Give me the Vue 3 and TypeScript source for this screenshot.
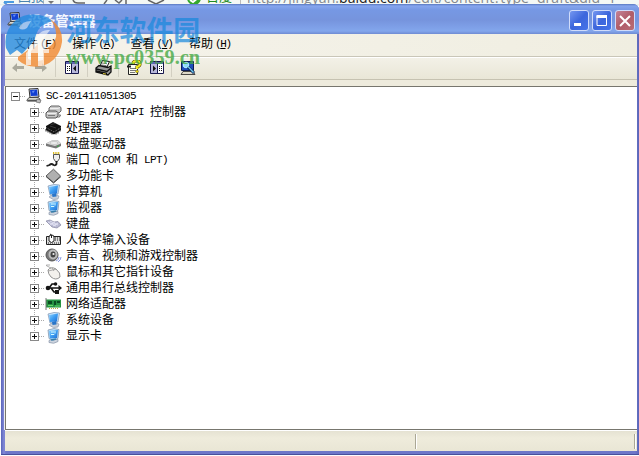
<script setup lang="ts">
interface Segment { text: string; latin: boolean }
interface Device { label: string; icon: string }

const devices: Device[] = [
  { label: 'IDE ATA/ATAPI 控制器', icon: 'ide' },
  { label: '处理器', icon: 'cpu' },
  { label: '磁盘驱动器', icon: 'disk' },
  { label: '端口 (COM 和 LPT)', icon: 'port' },
  { label: '多功能卡', icon: 'card' },
  { label: '计算机', icon: 'computer' },
  { label: '监视器', icon: 'monitor' },
  { label: '键盘', icon: 'keyboard' },
  { label: '人体学输入设备', icon: 'hid' },
  { label: '声音、视频和游戏控制器', icon: 'sound' },
  { label: '鼠标和其它指针设备', icon: 'mouse' },
  { label: '通用串行总线控制器', icon: 'usb' },
  { label: '网络适配器', icon: 'network' },
  { label: '系统设备', icon: 'computer' },
  { label: '显示卡', icon: 'monitor' },
]

const menus = [
  { label: '文件', key: 'F' },
  { label: '操作', key: 'A' },
  { label: '查看', key: 'V' },
  { label: '帮助', key: 'H' },
]

// Latin runs are set in a narrower fixed-width face than the Chinese ones
function segments(label: string): Segment[] {
  return (label.match(/[\x20-\x7e]+|[^\x20-\x7e]+/g) ?? []).map((text) => ({
    text,
    latin: /^[\x20-\x7e]/.test(text),
  }))
}
</script>

<template>
  <div class="desktop">
    <div class="browser-strip">
      <div class="tabs">
        <svg width="215" height="6" viewBox="0 0 215 6">
          <path d="M4 2h10M4 2l3 3" stroke="#4c9be0" stroke-width="2" fill="none" />
          <path d="M48 1l3 3 3-3" fill="#777" />
          <path d="M43.500 0v5M60.500 0v5" stroke="#bbb" />
          <path d="M73 0q1 3 5 3h7M104 4l3-4M115 0l4 3 3-3M126 0v4M148 0l8 4 8-4" stroke="#666" stroke-width="1.500" fill="none" />
          <circle cx="194" cy="-2" r="7" fill="#35a82c" />
          <path d="M190 0l3 2 6-5" stroke="#fff" stroke-width="2" fill="none" />
        </svg>
        <span class="tab-back">回报</span>
        <span class="tab-site">百度</span>
      </div>
      <span class="url">http://jingyan.<b>baidu.com</b>/edit/content?type=draft&amp;did=1</span>
    </div>

    <div class="window">
      <header class="titlebar">
        <svg class="title-icon" width="16" height="16" viewBox="0 0 16 16"><use href="#i-pc" /></svg>
        <span class="title">设备管理器</span>
        <div class="buttons">
          <span class="btn"><svg width="20" height="20"><path d="M5 14.500h7" stroke="#fff" stroke-width="3" /></svg></span>
          <span class="btn"><svg width="20" height="20"><path d="M5 6v9.500h9.500V6" fill="none" stroke="#fff" /><path d="M4.500 6.500h10.500" stroke="#fff" stroke-width="3" /></svg></span>
          <span class="btn close"><svg width="20" height="20"><path d="M5 6l10 10M15 6L5 16" stroke="#fff" stroke-width="2" /></svg></span>
        </div>
      </header>

      <nav class="menubar">
        <span v-for="m in menus" :key="m.key" class="menu">{{ m.label }}<span class="hot">(<u>{{ m.key }}</u>)</span></span>
      </nav>

      <div class="toolbar">
        <svg class="arrows" width="38" height="16" viewBox="0 0 38 16">
          <path d="M1 8l5-5v3h7v3H6v3z" fill="#aaa99d" />
          <path d="M36 8l-5-5v3h-7v3h7v3z" fill="#aaa99d" />
        </svg>
        <i class="sep"></i>
        <svg class="t1" width="15" height="14" viewBox="0 0 15 14">
          <path d="M.5.500h13v12H.5z" fill="#fff" stroke="#18184e" />
          <path d="M1 2h12" stroke="#6064b4" stroke-width="2" />
          <path d="M7 3h6v9H7z" fill="#b8b8dc" /><path d="M6.500 2v10" stroke="#18184e" />
          <path d="M2 5.500h1M4 5.500h1M2 7.500h1M4 7.500h1M2 9.500h1M4 9.500h1" stroke="#111" />
          <path d="M11 4.500v6L8 7.500z" fill="#111" />
        </svg>
        <i class="sep"></i>
        <svg class="t2" width="17" height="16" viewBox="0 0 17 16">
          <path d="M5 6L7.500.500l7 1L12 7z" fill="#fff" stroke="#111" />
          <path d="M7 3l5 .7M6.500 5l5 .7" stroke="#555" stroke-width=".8" />
          <path d="M1 8l3-2.500 9 2L16 6v6l-3 3L1 12z" fill="#999" stroke="#111" stroke-width="1.300" />
          <path d="M1 9l11 2.500L16 8M1 11l11 2.500" stroke="#111" fill="none" stroke-width="1.400" />
          <path d="M8 13.500l3 .6" stroke="#dec832" />
        </svg>
        <i class="sep"></i>
        <svg class="t3" width="15" height="16" viewBox="0 0 15 16">
          <path d="M1.500 4.500h9v10h-9z" fill="#fffef0" stroke="#222" />
          <path d="M3 8.500h6M3 10.500h6M3 12.500h5" stroke="#777" />
          <path d="M6 4q0-3 3.500-3t3.500 3q0 2-3 3v2" fill="none" stroke="#655b00" stroke-width="3.200" />
          <path d="M6 4q0-3 3.500-3t3.500 3q0 2-3 3v2" fill="none" stroke="#f5ea20" stroke-width="2" />
          <circle cx="10" cy="11.500" r="1.400" fill="#f5e400" stroke="#444" stroke-width=".5" />
          <path d="M0 6.500h4" stroke="#222" stroke-width="2" />
        </svg>
        <svg class="t4" width="15" height="14" viewBox="0 0 15 14">
          <path d="M.5.500h13v12H.5z" fill="#b8b8dc" stroke="#18184e" />
          <path d="M1 2h12" stroke="#6064b4" stroke-width="2" />
          <path d="M8 3h5v9H8z" fill="#fff" /><path d="M7.500 2v10" stroke="#18184e" />
          <path d="M9 5.500h1M11 5.500h1M9 7.500h1M11 7.500h1M9 9.500h1M11 9.500h1" stroke="#111" />
          <path d="M3 4.500v6l3-3z" fill="#111" />
        </svg>
        <i class="sep"></i>
        <svg class="t5" width="16" height="16" viewBox="0 0 16 16">
          <path d="M1.500 1.500h12v9h-12z" fill="#1d4ebc" stroke="#0c1d55" />
          <path d="M1 14.500l2-3h10l2 3z" fill="#ddd8c8" stroke="#222" stroke-width=".8" />
          <circle cx="6" cy="5" r="2.800" fill="#8edcf8" stroke="#bdf0ff" />
          <path d="M8 7l6 6" stroke="#061c4c" stroke-width="2.800" /><path d="M8 6.500l5.500 6" stroke="#6cc8ef" stroke-width="1.400" />
        </svg>
      </div>

      <div class="gap"></div>

      <main class="tree">
        <div class="row root">
          <span class="box minus"></span><i class="dots"></i>
          <svg width="16" height="16" viewBox="0 0 16 16"><use href="#i-pc" /></svg>
          <span class="label"><span class="latin">SC-201411051305</span></span>
        </div>
        <div class="children">
          <div v-for="d in devices" :key="d.label" class="row">
            <span class="box"></span><i class="dots"></i>
            <svg width="17" height="16" viewBox="0 0 17 16"><use :href="'#i-' + d.icon" /></svg>
            <span class="label"><span v-for="(s, i) in segments(d.label)" :key="i" :class="{ latin: s.latin }">{{ s.text }}</span></span>
          </div>
        </div>
      </main>

      <footer class="status"><span class="pane wide"></span><span class="pane"></span></footer>
    </div>

    <svg class="brand" width="210" height="76" viewBox="0 0 210 76">
      <g opacity=".8">
        <path d="M6 48Q3 31 16 20 28 11 47 17L53 21Q39 24 36 35L34 41 22 54 17 50 10 55z" fill="#258be0" />
        <path d="M19 28Q22 21 31 21l-4 7q-5 3-8 0z" fill="#a9cdf0" />
        <path d="M50 19Q63 27 62 42 59 61 42 66 28 69 18 60L18 57 28 50V59L31 60V51L38 44V61L43 60V50Q54 46 56 37 57 27 50 19z" fill="#f28a31" />
        <path d="M37 36Q42 29 50 30L44 38V49H49V53H44V66H38V53H31V65H26V53L33 45z" fill="#fff" opacity=".72" />
      </g>
      <text x="66" y="41" textLength="134" lengthAdjust="spacingAndGlyphs" class="brand-name">河东软件园</text>
      <text x="66" y="64" textLength="134" lengthAdjust="spacingAndGlyphs" class="brand-url">www.pc0359.cn</text>
    </svg>

    <svg class="defs" width="0" height="0">
      <defs>
        <linearGradient id="screen" x1="0" y1="0" x2="1" y2="1">
          <stop offset="0" stop-color="#8fd3ff" /><stop offset=".5" stop-color="#3d9df2" /><stop offset="1" stop-color="#1f6cd0" />
        </linearGradient>
        <linearGradient id="metal" x1="0" y1="0" x2="0" y2="1">
          <stop offset="0" stop-color="#eee" /><stop offset="1" stop-color="#8d8d8d" />
        </linearGradient>
        <symbol id="i-pc" viewBox="0 0 16 16">
          <path d="M3 1l9-.5 1 8.500-9 .5z" fill="#e4e4e4" stroke="#333" />
          <path d="M4 2l7-.4.8 6.200-7 .3z" fill="#123fd2" />
          <path d="M6 3l3-.5-2 3z" fill="#648cf4" />
          <path d="M1 12l2-2.500h9l2 1.500-1 2H1z" fill="#d8d8d0" stroke="#333" stroke-width=".8" />
          <path d="M2 12.500h9" stroke="#555" stroke-width="1.500" />
          <path d="M11 11l4 1-1 3-4-1z" fill="#bbb" stroke="#555" stroke-width=".6" />
        </symbol>
        <symbol id="i-ide" viewBox="0 0 17 16">
          <path d="M4 4l2-2h8l2 1.500V7l-2 2H4z" fill="#c9c9c9" stroke="#666" />
          <path d="M5 4.500h8l2-1" stroke="#eee" fill="none" />
          <path d="M1 9l2-2h8l2 1.500V12l-2 2H2l-1-1.500z" fill="#c4c4c4" stroke="#555" />
          <path d="M2 9.500h9l1-1" stroke="#eee" fill="none" /><path d="M3 11.500h7" stroke="#777" />
          <path d="M13.500 11h2l-1 2h-3" stroke="#666" fill="none" />
        </symbol>
        <symbol id="i-cpu" viewBox="0 0 17 16">
          <path d="M1 6L8 2l8 4v4l-7 4.500L1 10z" fill="#111" />
          <path d="M1 9v2.500M3 10v2.500M5 11v2.500M7 12v2.500M11 12v2.500M13 11v2.500M15 9v2.500" stroke="#222" stroke-width="1" />
          <path d="M1 7.500l8 4.500 7-4.500" stroke="#999" stroke-width=".8" stroke-dasharray="1 1" fill="none" />
          <path d="M6 4.500l4-1M5 6l6 2" stroke="#555" stroke-width=".6" />
        </symbol>
        <symbol id="i-disk" viewBox="0 0 17 16">
          <path d="M1 7.500L7 4.500h6l3 3v2.500L11 12.500 1 10z" fill="#777" />
          <path d="M1 7.500L7 4.500h6l3 3-6 2.500z" fill="#dadada" />
          <ellipse cx="9" cy="7" rx="4" ry="1.300" fill="#f5f5f5" stroke="#aaa" stroke-width=".5" />
          <path d="M12 10.500l2-.8" stroke="#3bb34a" />
        </symbol>
        <symbol id="i-port" viewBox="0 0 17 16">
          <path d="M8.500 2.500h6v4l-2 3h-2l-2-3z" fill="#eee" stroke="#555" />
          <path d="M8 1h7" stroke="#d7b71e" stroke-width="2" stroke-dasharray="1 .7" />
          <path d="M11.500 9v3q-1 2-3 1-2-2-4 0l-3 1" fill="none" stroke="#222" stroke-width="1.800" />
        </symbol>
        <symbol id="i-card" viewBox="0 0 17 16">
          <path d="M8.500 1.200l7 6.800-7 6.500L1 8z" fill="#b0b0b0" stroke="#5c5c5c" />
          <path d="M1 8.500l7.500 6.500L16 8.500" stroke="#444" fill="none" />
        </symbol>
        <symbol id="i-computer" viewBox="0 0 17 16">
          <path d="M4 13q4-4 10-1l-1 3q-5 2-9-2z" fill="#c9d0da" stroke="#8c96a8" stroke-width=".6" />
          <path d="M3 2l6-1.500L14.500 1 13 10l-8 1z" fill="#cfe9ff" stroke="#788fae" stroke-width=".7" />
          <path d="M4 3l9-1.500-1 8L5 10z" fill="url(#screen)" />
          <path d="M7 10l4-1 .5 3.500-4 .5z" fill="#2a75c8" />
        </symbol>
        <symbol id="i-monitor" viewBox="0 0 17 16">
          <path d="M4 12.500q4-3 9-1v2q-4 3-9 1z" fill="#ccd4df" stroke="#8894a7" stroke-width=".7" />
          <path d="M3 2l6-1.500 5 1-1 9-5 2-4-2z" fill="#b9dff8" stroke="#7b8ea7" stroke-width=".7" />
          <path d="M4 3l9-1-1 8-7 .5z" fill="url(#screen)" />
          <path d="M6 4h5M6 6.500h3l1-1" stroke="#d8fbff" fill="none" />
          <path d="M6 12l5-1" stroke="#367eaa" stroke-width="1.500" />
        </symbol>
        <symbol id="i-keyboard" viewBox="0 0 17 16">
          <path d="M1 5l4-1 4 2 4-.5 3 3.500-4 3-5-1z" fill="#b7b8d1" stroke="#8687a4" stroke-width=".7" />
          <path d="M3 6l8 4M5 5l8 4M5 9l5-3M8 10l5-3" stroke="#f1f1ff" stroke-width=".7" />
        </symbol>
        <symbol id="i-hid" viewBox="0 0 17 16">
          <path d="M1.500 4.500h14v8h-14z" fill="#ddd" stroke="#222" />
          <path d="M3 11h11M10 8h5M10 6h5" stroke="#222" stroke-width="1" stroke-dasharray="1 1" />
          <path d="M4 5q0-2 2.500-2T9 5v4q-2.500 3-5 0z" fill="#fff" stroke="#222" />
          <path d="M6.500 6V3L5 2" stroke="#222" fill="none" />
        </symbol>
        <symbol id="i-sound" viewBox="0 0 17 16">
          <ellipse cx="7" cy="7" rx="6" ry="6" fill="#777" stroke="#555" />
          <ellipse cx="8" cy="6.500" rx="4.500" ry="5" fill="#bbb" />
          <ellipse cx="8" cy="6.500" rx="2.500" ry="3" fill="#444" /><circle cx="8.500" cy="6" r="1.100" fill="#eee" />
          <path d="M11 13q3-1 3-4M13 14q3-2 3-5" stroke="#8998df" fill="none" />
        </symbol>
        <symbol id="i-mouse" viewBox="0 0 17 16">
          <path d="M3 6q3-4 8-1 5 4 4 8-4 4-9 0-3-3-3-7z" fill="#f3f1ed" stroke="#929292" />
          <path d="M3 7q5-1 8-2M7 4l2 3M6 4L2 2q-2-1 0-1h3" stroke="#999" fill="none" stroke-width=".8" />
        </symbol>
        <symbol id="i-usb" viewBox="0 0 17 16">
          <path d="M2 8h14M4 8l3-4h3M6 8l3 4h3" fill="none" stroke="#151515" stroke-width="1.600" />
          <circle cx="3" cy="8" r="2.300" fill="#151515" /><circle cx="10.500" cy="4" r="1.800" fill="#151515" />
          <path d="M10 10h4v4h-4zM13.500 5l3.500 3-3.500 3z" fill="#151515" />
        </symbol>
        <symbol id="i-network" viewBox="0 0 17 16">
          <path d="M1 3.500h15v8H1z" fill="#259341" />
          <path d="M1 2v12" stroke="#777" /><path d="M3 5h4v3H3zM9 5h2v4H9zM12 5h3v2h-3z" fill="#0a4d20" />
          <path d="M3 9.500h5M10 10h5" stroke="#65d267" /><path d="M4 12.500h9" stroke="#bdb33d" stroke-dasharray="1 1" />
        </symbol>
      </defs>
    </svg>
  </div>
</template>

<style>
body { overflow: hidden; background: #fff; }
</style>

<style scoped>
.desktop {
  position: relative;
  width: 639px;
  height: 456px;
  overflow: hidden;
  background: linear-gradient(#e6eeea 0 5px, #fbfcff 6px);
  font-family: "Liberation Sans", "Noto Sans CJK SC", sans-serif;
  font-size: 12px;
  color: #000;
}
.browser-strip { display: flex; height: 4px; overflow: hidden; background: #f4f8f5; }
.tabs { position: relative; width: 240px; height: 4px; flex: none; border-right: 1px solid #bbb; }
.tabs svg { display: block; }
.tab-back, .tab-site { position: absolute; top: -11px; line-height: 16px; font-size: 13px; }
.tab-back { left: 18px; color: #4c83ad; }
.tab-site { left: 206px; color: #238b22; }
.url {
  margin: -12px 0 0 6px;
  line-height: 20px;
  font-family: "Open Sans", sans-serif;
  font-size: 14.1px;
  color: #85898d;
  white-space: nowrap;
}
.url b { font-weight: 400; color: #222; }
.window {
  box-sizing: border-box;
  width: 638px;
  height: 451px;
  margin-left: 1px;
  padding: 0 2px 4px 4px;
  display: flex;
  flex-direction: column;
  border-radius: 7px 6px 0 0;
  background: linear-gradient(90deg, #5964b8, #8289d8 3px, #6d77c9 5px, #6d77c9 634px, #5b66b9);
  box-shadow: inset 0 -1px #48509c;
  overflow: hidden;
}
.titlebar {
  display: flex;
  align-items: center;
  flex: none;
  box-sizing: border-box;
  height: 30px;
  margin: 0 -2px 0 -4px;
  padding: 2px 4px 0 6px;
  background: linear-gradient(#5a78c0 0, #85a5ee 2px, #7698e4 6px, #7694dd 16px, #7e9fe7 23px, #83a7ec 27px, #6f8bd3 30px);
}
.title { margin-left: 5px; font-size: 13.6px; font-weight: 700; color: #f4f7ff; white-space: nowrap; }
.buttons { display: flex; gap: 3px; margin-left: auto; }
.btn {
  box-sizing: border-box;
  width: 20px;
  height: 21px;
  border: 1px solid #d0dcfb;
  border-radius: 3px;
  background: linear-gradient(135deg, #7597f0, #3c66dc 50%, #4674e9);
}
.btn svg { display: block; margin: -1px; }
.btn.close { background: linear-gradient(135deg, #c48498, #b05c68 50%, #b96d76); }
.menubar {
  display: flex;
  gap: 16px;
  flex: none;
  box-sizing: border-box;
  height: 23px;
  padding-left: 9px;
  line-height: 21px;
  background: linear-gradient(90deg, #f5f3eb, #f0eee1);
  border-bottom: 1px solid #c9c6b8;
}
.menu { display: flex; width: 42.300px; white-space: nowrap; }
.hot { font-family: "Liberation Mono", monospace; font-size: 11px; letter-spacing: -1.3px; margin-left: 2px; }
.toolbar {
  display: flex;
  align-items: center;
  flex: none;
  box-sizing: border-box;
  height: 23px;
  padding: 0 0 2px 6px;
  border-top: 1px solid #fff;
  border-bottom: 1px solid #c6c2b1;
  background: linear-gradient(#f3f1e7, #e9e6d7);
}
.toolbar svg { flex: none; }
.sep { width: 1px; height: 19px; background: #d2cfc1; flex: none; }
.arrows + .sep { margin-left: 6px; }
.t1 { margin: 0 7px 0 9px; }
.t2 { margin: 0 6px 0 7px; }
.t3 { margin: 0 8px 0 8px; }
.t4 { margin-right: 6px; }
.t5 { margin-left: 8px; }
.gap { flex: none; height: 6px; background: #eeebdd; }
.tree {
  flex: 1;
  box-sizing: border-box;
  padding: 1px 0 0 5px;
  background: #fff;
  border: solid #77766e;
  border-width: 1px 0 1px 1px;
  box-shadow: -1px 0 #eee;
}
.row { display: flex; align-items: center; height: 16px; white-space: nowrap; }
.row svg { flex: none; }
.box {
  box-sizing: border-box;
  width: 9px;
  height: 9px;
  flex: none;
  border: 1px solid #898989;
  background:
    linear-gradient(#111, #111) center / 5px 1px no-repeat,
    linear-gradient(#111, #111) center / 1px 5px no-repeat,
    #fff;
}
.box.minus { background: linear-gradient(#111, #111) center / 5px 1px no-repeat, #fff; }
.dots { width: 6px; height: 1px; flex: none; background: repeating-linear-gradient(90deg, #aaa 0 1px, transparent 1px 2px); }
.children { padding-left: 19px; background: repeating-linear-gradient(#aaa 0 1px, #fff 1px 2px) 23px 0 / 1px 232px no-repeat; }
.label { margin-left: 4px; display: flex; align-items: center; line-height: 16px; }
.latin { font-family: "Liberation Mono", monospace; font-size: 11px; letter-spacing: -0.6px; white-space: pre; }
.status {
  display: flex;
  flex: none;
  height: 21px;
  box-sizing: border-box;
  padding: 3px 2px 2px 0;
  border-top: 1px solid #fff;
  background: linear-gradient(#e5e2d2, #efecdc 7px, #e9e6d5);
}
.pane { flex: 1; border-right: 1px solid #aaa795; box-shadow: 1px 0 #fff; }
.pane.wide { flex: none; width: 410px; }
.brand { position: absolute; left: 0; top: 0; }
.brand-name { font: 700 28px "Noto Sans CJK SC", sans-serif; fill: #1688dd; opacity: .7; }
.brand-url { font: 700 20px "Liberation Serif", serif; fill: #43a943; opacity: .78; }
.defs { position: absolute; }
</style>
